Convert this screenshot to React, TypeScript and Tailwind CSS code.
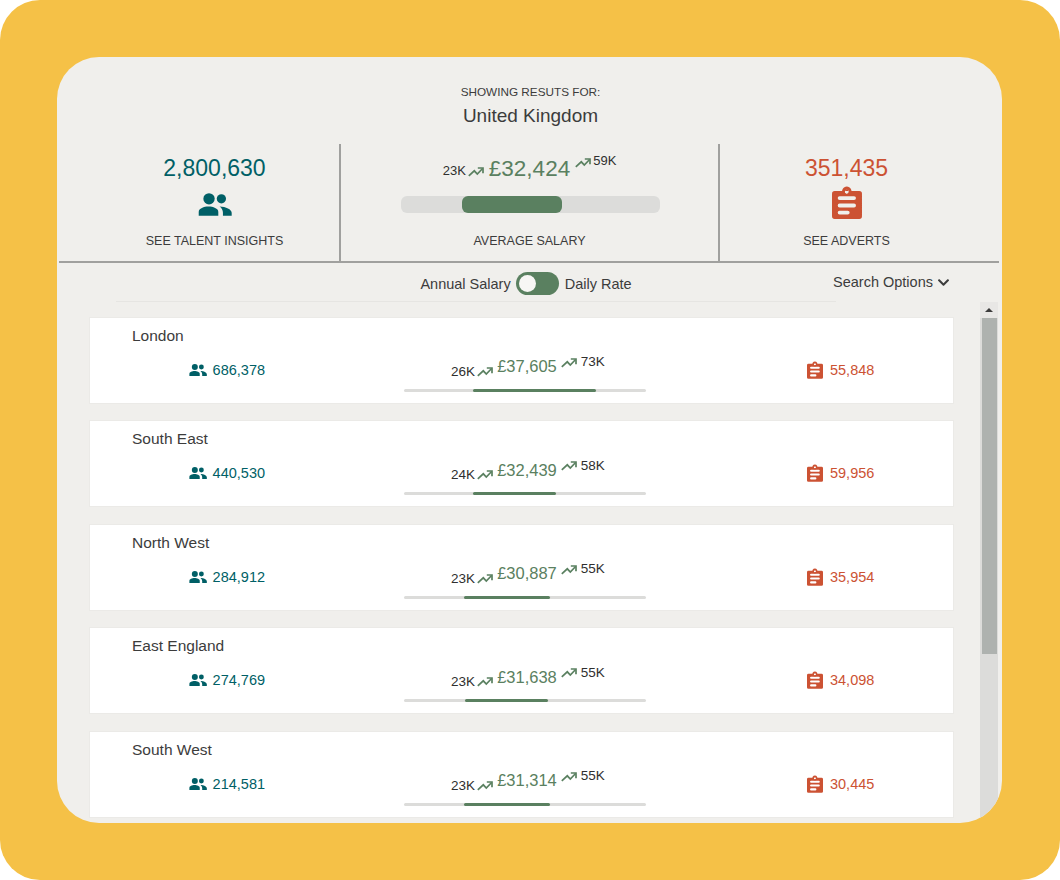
import { FaChevronDown } from "react-icons/fa";

const regions = [
  { name: "London", people: "686,378", low: "26K", salary: "£37,605", high: "73K", adverts: "55,848", start: 69, width: 123 },
  { name: "South East", people: "440,530", low: "24K", salary: "£32,439", high: "58K", adverts: "59,956", start: 69, width: 83 },
  { name: "North West", people: "284,912", low: "23K", salary: "£30,887", high: "55K", adverts: "35,954", start: 60, width: 86 },
  { name: "East England", people: "274,769", low: "23K", salary: "£31,638", high: "55K", adverts: "34,098", start: 61, width: 83 },
  { name: "South West", people: "214,581", low: "23K", salary: "£31,314", high: "55K", adverts: "30,445", start: 60, width: 86 },
];

function PeopleIcon({ className }: { readonly className: string }) {
  return (
    <svg viewBox="0 0 33 22" fill="currentColor" className={className}>
      <circle cx="10.7" cy="5.5" r="5.5" />
      <circle cx="22.7" cy="5.5" r="4.5" />
      <path d="M0.7 22v-4c0-3 5-5 9.5-5s9.5 2 9.5 5v4z" />
      <path d="M21 13c6 0 11.7 3 11.7 6v3h-8.5v-3c0-2-1-4.500-3.200-6z" />
    </svg>
  );
}

function ClipboardIcon({ className }: { readonly className: string }) {
  const hole = "M12 5.500a2 2 0 1 0 4 0a2 2 0 1 0-4 0z";
  return (
    <svg viewBox="0 0 28.400 31.300" fill="currentColor" fillRule="evenodd" className={className}>
      <path d={`M14 0.500a4.500 4.500 0 1 0 0.010 0z${hole}`} />
      <path
        d={`M2.500 4.700h23.400a2.500 2.500 0 0 1 2.500 2.500v21.600a2.500 2.500 0 0 1-2.500 2.500h-23.400a2.500 2.500 0 0 1-2.500-2.500v-21.600a2.500 2.500 0 0 1 2.500-2.500z${hole}M7.200 9.700h13.700a1.800 1.800 0 0 1 0 3.600h-13.700a1.800 1.800 0 0 1 0-3.600zM7.200 16.700h13.700a1.800 1.800 0 0 1 0 3.600h-13.700a1.800 1.800 0 0 1 0-3.600zM7.200 23.400h7.700a1.800 1.800 0 0 1 0 3.600h-7.700a1.800 1.800 0 0 1 0-3.600z`}
      />
    </svg>
  );
}

function TrendIcon({ className }: { readonly className: string }) {
  return (
    <svg viewBox="0 0 16 10" fill="none" stroke="#5a8060" strokeWidth="1.700" className={`h-[10px] w-[16px] shrink-0 ${className}`}>
      <path d="M0.800 8.800L6.300 3.800L9.300 7L14.600 1.500" />
      <path d="M9.800 1H15V6.200" />
    </svg>
  );
}

function RegionCard({ region }: { readonly region: (typeof regions)[number] }) {
  return (
    <div className="mb-[16.5px] h-[87px] shrink-0 border border-[#ebeae7] bg-white pl-[42px] pt-[8px]">
      <div className="text-[15.5px] leading-5 text-[#3c3c3c]">{region.name}</div>
      <div className="-ml-[43px] mt-[14px] flex">
        <div className="flex h-[20px] w-[276px] items-center justify-center gap-[6px] pt-[2px] text-[14.5px] text-[#005f66]">
          <PeopleIcon className="-mt-[2px] h-[12px] w-[18px]" />
          <span>{region.people}</span>
        </div>
        <div className="ml-[39px] -mt-[5px] w-[243px]">
          <div className="flex h-[24px] items-center justify-center pl-[6px] text-[13.5px] text-[#2f2f2f]">
            <span className="mt-[10px]">{region.low}</span>
            <TrendIcon className="mx-[2px] mt-[10px]" />
            <span className="mx-[2px] text-[16.5px] text-[#5a8060]">{region.salary}</span>
            <TrendIcon className="mx-[2px] -mt-[8px]" />
            <span className="-mt-[9px] ml-[2px]">{region.high}</span>
          </div>
          <div className="mt-[10px] h-[3px] rounded-full bg-[#dcdcda]">
            <div
              className="h-full rounded-full bg-[#5a8060]"
              style={{ marginLeft: region.start, width: region.width }}
            />
          </div>
        </div>
        <div className="ml-[80px] flex h-[20px] w-[227px] items-center justify-center gap-[7px] pl-[2px] pt-[2px] text-[14.5px] text-[#cc5233]">
          <ClipboardIcon className="-mt-[2px] h-[18px] w-[16px]" />
          <span>{region.adverts}</span>
        </div>
      </div>
    </div>
  );
}

export default function App() {
  return (
    <div className="h-[880px] w-[1060px] bg-white font-['Liberation_Sans',Arial,sans-serif]">
      <div className="h-full w-full rounded-[40px] bg-[#f5c147] p-[57px] pr-[58px]">
        <div className="flex h-[766px] flex-col overflow-hidden rounded-[42px] bg-[#f0efec] text-[#3c3c3c]">
          <header className="flex h-[87px] shrink-0 flex-col items-center pl-[2px] pt-[27px]">
            <div className="text-[11.75px] leading-4">SHOWING RESUTS FOR:</div>
            <div className="mt-[4px] text-[19px] leading-6">United Kingdom</div>
          </header>

          <section className="ml-[2px] mr-[3px] flex h-[119px] shrink-0 border-b-2 border-[#a0a09e]">
            <div className="flex w-[280px] flex-col items-center pl-[31px] pt-[10px]">
              <div className="text-[23px] leading-7 text-[#005f66]">2,800,630</div>
              <PeopleIcon className="mt-[11px] h-[23px] w-[34px] text-[#005f66]" />
              <div className="mt-[17px] text-[12.5px] leading-4">SEE TALENT INSIGHTS</div>
            </div>
            <div className="flex w-[381px] flex-col items-center border-x-2 border-[#a0a09e] pt-[11px]">
              <div className="flex h-[28px] items-center text-[13px] text-[#2f2f2f]">
                <span className="mt-[4px]">23K</span>
                <TrendIcon className="mx-[2px] mt-[5px]" />
                <span className="mx-[3px] text-[22.5px] text-[#5a8060]">£32,424</span>
                <TrendIcon className="ml-[2px] mr-[1px] -mt-[12px]" />
                <span className="-mt-[16px] ml-[1px]">59K</span>
              </div>
              <div className="ml-[2px] mt-[13px] h-[17px] w-[259px] rounded-[6px] bg-[#dcdcda]">
                <div className="ml-[61px] h-full w-[100px] rounded-[6px] bg-[#5a8060]" />
              </div>
              <div className="mt-[20px] text-[12.5px] leading-4">AVERAGE SALARY</div>
            </div>
            <div className="flex w-[253px] flex-col items-center pt-[10px]">
              <div className="text-[23px] leading-7 text-[#cc5233]">351,435</div>
              <ClipboardIcon className="mt-[4px] h-[33px] w-[30px] text-[#cc5233]" />
              <div className="mt-[14px] text-[12.5px] leading-4">SEE ADVERTS</div>
            </div>
          </section>

          <div className="relative ml-[59px] mr-[166px] flex h-[39px] shrink-0 items-center justify-center border-b border-[#e6e5e2] pl-[100px] pt-[2px] text-[14.5px]">
            <span className="mt-[3px]">Annual Salary</span>
            <div className="ml-[5px] mr-[6px] flex h-[23px] w-[43px] items-center rounded-full bg-[#5a8060] pl-[3px]">
              <div className="h-[17px] w-[17px] rounded-full bg-[#f7f6f4]" />
            </div>
            <span className="mt-[3px]">Daily Rate</span>
            <div className="absolute left-[717px] top-[9px] flex w-[130px] items-center gap-[4px]">
              Search Options
              <FaChevronDown className="text-[13px]" />
            </div>
          </div>

          <div className="flex min-h-0 flex-1">
            <div className="ml-[32px] flex w-[865px] flex-col pt-[14.75px]">
              {regions.map((region) => (
                <RegionCard key={region.name} region={region} />
              ))}
            </div>
            <div className="ml-[26px] flex w-[18px] flex-col bg-[#dcdcda]">
              <div className="flex h-[16px] items-center justify-center bg-[#e8e7e5]">
                <div className="h-0 w-0 border-x-[4px] border-b-[4px] border-x-transparent border-b-[#3c3c3c]" />
              </div>
              <div className="ml-[2px] mr-[1px] h-[336px] bg-[#aeb2af]" />
            </div>
          </div>
        </div>
      </div>
    </div>
  );
}
